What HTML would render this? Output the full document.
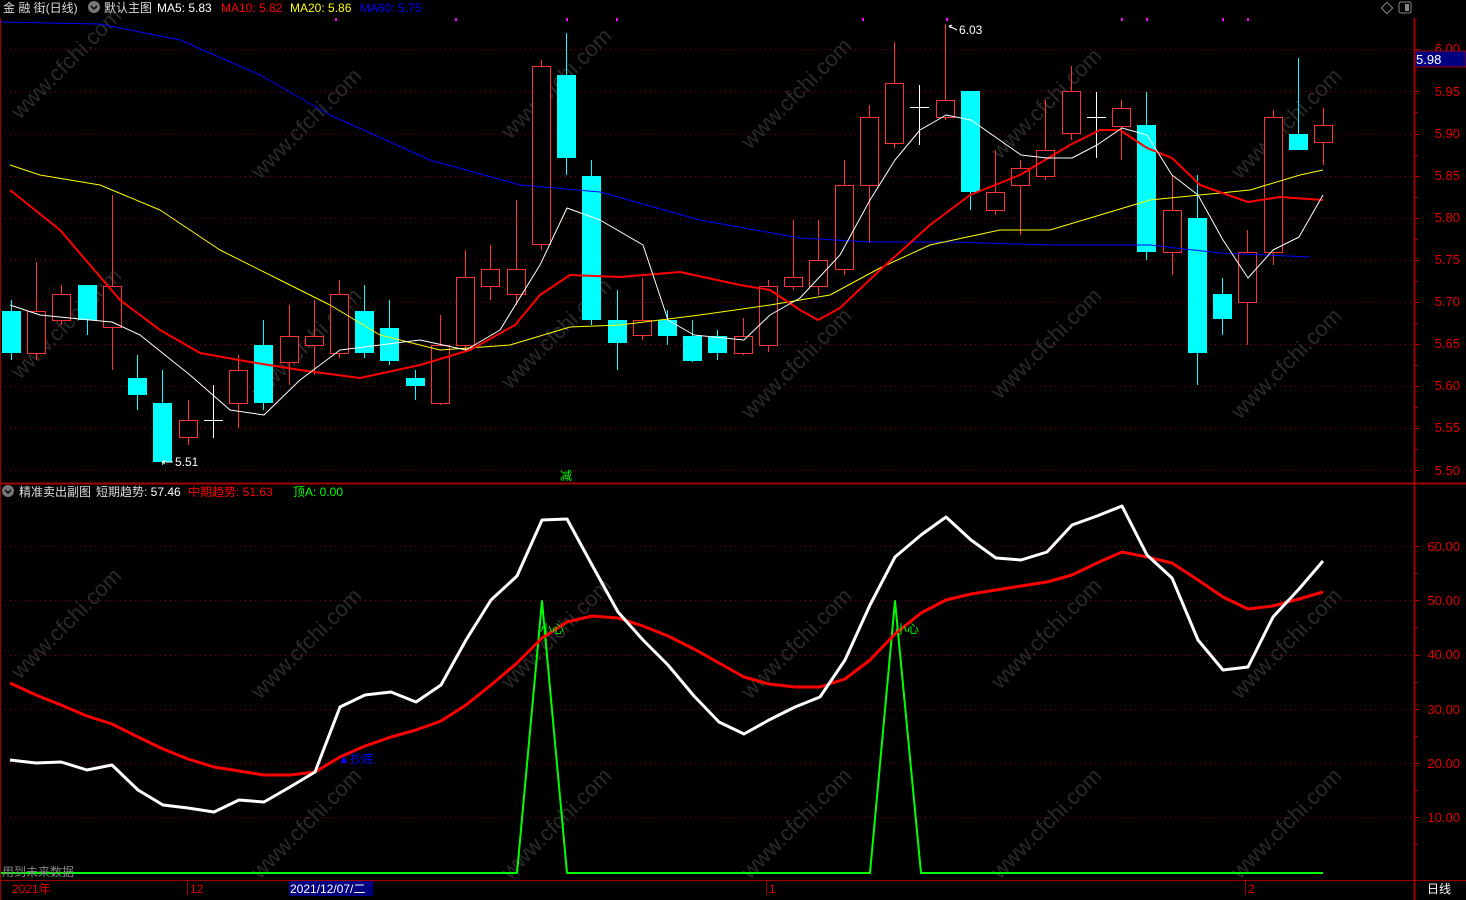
<!DOCTYPE html>
<html><head><meta charset="utf-8">
<style>
html,body{margin:0;padding:0;background:#000;width:1466px;height:900px;overflow:hidden;}
svg{display:block;}
text{font-family:"Liberation Sans","Noto Sans CJK SC",sans-serif;}
</style></head><body>
<svg id="s" width="1466" height="900" xmlns="http://www.w3.org/2000/svg">
<rect width="1466" height="900" fill="#000"/>
<g id="grid"></g>
<g id="wm" fill="#2a2a2a" font-size="22">
<text transform="translate(20,120) rotate(-45)">www.cfchi.com</text>
<text transform="translate(260,180) rotate(-45)">www.cfchi.com</text>
<text transform="translate(510,140) rotate(-45)">www.cfchi.com</text>
<text transform="translate(750,150) rotate(-45)">www.cfchi.com</text>
<text transform="translate(1000,160) rotate(-45)">www.cfchi.com</text>
<text transform="translate(1240,180) rotate(-45)">www.cfchi.com</text>
<text transform="translate(20,380) rotate(-45)">www.cfchi.com</text>
<text transform="translate(260,400) rotate(-45)">www.cfchi.com</text>
<text transform="translate(510,390) rotate(-45)">www.cfchi.com</text>
<text transform="translate(750,420) rotate(-45)">www.cfchi.com</text>
<text transform="translate(1000,400) rotate(-45)">www.cfchi.com</text>
<text transform="translate(1240,420) rotate(-45)">www.cfchi.com</text>
<text transform="translate(20,680) rotate(-45)">www.cfchi.com</text>
<text transform="translate(260,700) rotate(-45)">www.cfchi.com</text>
<text transform="translate(510,690) rotate(-45)">www.cfchi.com</text>
<text transform="translate(750,700) rotate(-45)">www.cfchi.com</text>
<text transform="translate(1000,690) rotate(-45)">www.cfchi.com</text>
<text transform="translate(1240,700) rotate(-45)">www.cfchi.com</text>
<text transform="translate(260,880) rotate(-45)">www.cfchi.com</text>
<text transform="translate(510,880) rotate(-45)">www.cfchi.com</text>
<text transform="translate(750,880) rotate(-45)">www.cfchi.com</text>
<text transform="translate(1000,880) rotate(-45)">www.cfchi.com</text>
<text transform="translate(1240,880) rotate(-45)">www.cfchi.com</text>
</g>
<g id="candles"></g>
<g id="lines" fill="none" stroke-linejoin="round"></g>
<line x1="0" y1="483.5" x2="1466" y2="483.5" stroke="#a00000" stroke-width="2"/>
<line x1="1414.5" y1="18" x2="1414.5" y2="900" stroke="#a00000" stroke-width="2"/>
<line x1="0" y1="880.5" x2="1466" y2="880.5" stroke="#a00000"/>
<line x1="0.5" y1="18" x2="0.5" y2="900" stroke="#a00000"/>
<g id="ticks" stroke="#a00000"></g>
<g fill="#e00000" font-size="13" text-anchor="end">
<text x="1460" y="53">6.00</text><text x="1460" y="96">5.95</text><text x="1460" y="138">5.90</text>
<text x="1460" y="180">5.85</text><text x="1460" y="222">5.80</text><text x="1460" y="264">5.75</text>
<text x="1460" y="306">5.70</text><text x="1460" y="348">5.65</text><text x="1460" y="390">5.60</text>
<text x="1460" y="432">5.55</text><text x="1460" y="475">5.50</text>
<text x="1460" y="551">60.00</text><text x="1460" y="605">50.00</text><text x="1460" y="659">40.00</text>
<text x="1460" y="714">30.00</text><text x="1460" y="768">20.00</text><text x="1460" y="822">10.00</text>
</g>
<rect x="1415" y="51" width="51" height="16" fill="#000080" stroke="#a00000"/>
<text x="1416" y="64" fill="#fff" font-size="13">5.98</text>
<rect x="1383" y="4" width="8" height="8" fill="none" stroke="#888" transform="rotate(45 1387 8)"/>
<rect x="1399" y="2" width="12" height="11" rx="2" fill="none" stroke="#888"/>
<rect x="1405" y="4" width="4" height="7" fill="#888"/>
<text x="3" y="12" fill="#ddd" font-size="12">金 融 街(日线)</text>
<circle cx="94" cy="7" r="6" fill="#777"/><path d="M91 6l3 3 3-3" stroke="#000" stroke-width="1.5" fill="none"/>
<text x="104" y="12" font-size="12" fill="#ddd">默认主图</text>
<text x="157" y="12" font-size="12" fill="#fff">MA5: 5.83</text>
<text x="221" y="12" font-size="12" fill="#ff0000">MA10: 5.82</text>
<text x="290" y="12" font-size="12" fill="#ffff00">MA20: 5.86</text>
<text x="360" y="12" font-size="12" fill="#0000ff">MA60: 5.75</text>
<g fill="#ff00ff">
<rect x="335" y="18" width="2" height="3"/><rect x="455" y="18" width="2" height="3"/><rect x="566" y="18" width="2" height="3"/><rect x="616" y="18" width="2" height="3"/><rect x="862" y="18" width="2" height="3"/><rect x="946" y="18" width="2" height="3"/><rect x="1121" y="18" width="2" height="3"/><rect x="1146" y="18" width="2" height="3"/><rect x="1222" y="18" width="2" height="3"/><rect x="1247" y="18" width="2" height="3"/>
</g>
<text x="959" y="34" fill="#fff" font-size="12">6.03</text>
<path d="M957 30l-8-4M949 26l3-1M949 26l2 2" stroke="#fff" fill="none"/>
<text x="175" y="466" fill="#fff" font-size="12">5.51</text>
<path d="M173 462h-11M162 462l3-2M162 462l3 2" stroke="#fff" fill="none"/>
<text x="560" y="480" fill="#00ff00" font-size="12">减</text>
<circle cx="8" cy="491" r="6" fill="#777"/><path d="M5 490l3 3 3-3" stroke="#000" stroke-width="1.5" fill="none"/>
<text x="19" y="496" font-size="12" fill="#ddd">精准卖出副图</text>
<text x="96" y="496" font-size="12" fill="#ddd">短期趋势: <tspan fill="#fff">57.46</tspan></text>
<text x="188" y="496" font-size="12" fill="#ff0000">中期趋势: 51.63</text>
<text x="293" y="496" font-size="12" fill="#00ff00">顶A: 0.00</text>
<text x="338" y="763" fill="#0000ff" font-size="12">▲抄底</text>
<text x="540" y="633" fill="#00ff00" font-size="12">小心</text>
<text x="895" y="633" fill="#00ff00" font-size="12">小心</text>
<text x="2" y="876" fill="#888" font-size="12">用到未来数据</text>
<text x="12" y="893" fill="#e00000" font-size="12">2021年</text>
<line x1="187.5" y1="881" x2="187.5" y2="895" stroke="#a00000"/>
<text x="190" y="893" fill="#e00000" font-size="12">12</text>
<rect x="289" y="881" width="84" height="15" fill="#000080"/>
<text x="290" y="893" fill="#fff" font-size="12">2021/12/07/二</text>
<line x1="766.5" y1="881" x2="766.5" y2="895" stroke="#a00000"/>
<text x="769" y="893" fill="#e00000" font-size="12">1</text>
<line x1="1245.5" y1="881" x2="1245.5" y2="895" stroke="#a00000"/>
<text x="1248" y="893" fill="#e00000" font-size="12">2</text>
<text x="1427" y="893" fill="#fff" font-size="12">日线</text>
</svg>
<script>
var NS="http://www.w3.org/2000/svg";
function el(p,t,a){var e=document.createElementNS(NS,t);for(var k in a)e.setAttribute(k,a[k]);document.getElementById(p).appendChild(e);return e;}
[49,91,134,176,218,260,302,344,386,428,470,546,600,655,709,763,817].forEach(function(y){
 el("grid","line",{x1:0,y1:y+.5,x2:1414,y2:y+.5,stroke:"#8a0000","stroke-dasharray":"1 4"});
 el("ticks","line",{x1:1414,y1:y+.5,x2:1420,y2:y+.5});
});
[70,112,155,197,239,281,323,365,407,449,573,627,682,736,790,844].forEach(function(y){el("ticks","line",{x1:1414,y1:y+.5,x2:1418,y2:y+.5});});
var C=[
["c",311,353,300,360],["r",311,353,262,360],["r",294,320,285,325],["c",285,320,285,335],["r",286,327,195,370],
["c",378,395,355,410],["c",403,462,370,465],["r",420,437,400,445],["x",420,420,385,438],["r",370,403,355,428],
["c",345,403,320,410],["r",336,362,305,385],["r",336,345,300,375],["r",294,353,280,358],["c",311,353,285,358],
["c",328,361,300,365],["c",378,386,370,400],["r",345,403,315,405],["r",277,345,250,350],["r",269,286,245,300],
["r",269,294,200,305],["r",66,244,60,250],["c",75,158,33,175],["c",176,320,160,325],["c",320,343,290,370],
["r",320,335,278,340],["c",320,336,310,345],["c",336,361,320,362],["c",336,353,330,360],["r",336,353,318,355],
["r",286,345,280,352],["r",277,286,220,290],["r",260,286,220,295],["r",185,269,160,275],["r",117,185,105,243],
["r",83,143,42,148],["x",107,107,85,145],["r",100,117,24,120],["c",91,192,91,210],["r",192,210,150,215],
["r",168,185,160,235],["r",150,176,100,180],["r",91,133,66,140],["x",117,117,92,158],["r",108,126,100,160],
["c",125,252,92,260],["r",210,252,175,275],["c",218,353,175,385],["c",294,319,278,335],["r",252,302,230,345],
["r",117,252,110,265],["c",134,150,58,150],["r",125,142,108,165]];
C.forEach(function(c,i){
 var x=Math.round(11+i*25.23);
 var col=c[0]=="c"?"#00ffff":(c[0]=="r"?"#ff3232":"#ffffff");
 el("candles","line",{x1:x+.5,y1:c[3],x2:x+.5,y2:c[4],stroke:col});
 if(c[0]=="c") el("candles","rect",{x:x-9,y:c[1],width:19,height:c[2]-c[1],fill:col});
 else if(c[0]=="r") el("candles","rect",{x:x-8.5,y:c[1]+.5,width:18,height:c[2]-c[1],fill:"#000",stroke:col});
 else el("candles","line",{x1:x-9,y1:c[1]+.5,x2:x+10,y2:c[1]+.5,stroke:col});
});
function pl(pts,col,w){el("lines","polyline",{points:pts,stroke:col,"stroke-width":w});}
pl("0,22 100,24 180,40 260,75 330,115 430,160 520,185 600,192 700,220 800,238 870,242 950,242 1050,245 1150,245 1220,253 1310,257","#0000ff",1);
pl("10,165 40,175 100,185 160,210 220,250 280,280 330,305 380,335 440,350 510,345 570,327 620,325 700,315 770,305 830,295 880,268 930,245 1000,230 1050,230 1100,215 1150,200 1200,195 1250,190 1300,175 1323,170","#ffff00",1);
pl("10,190 60,230 90,265 120,300 160,330 200,353 250,362 300,370 360,378 420,365 470,350 515,325 540,295 570,275 620,277 680,272 740,285 770,290 800,310 818,320 840,308 880,270 930,225 970,195 1020,175 1070,145 1100,130 1120,130 1147,148 1172,158 1200,185 1248,202 1280,197 1323,200","#ff0000",2);
pl("10,305 40,315 90,320 112,322 140,335 190,375 230,410 264,415 300,380 340,350 380,345 420,340 466,350 500,330 540,265 567,208 600,220 643,245 668,320 694,335 744,340 770,315 800,298 840,255 870,200 895,160 920,130 946,115 971,120 1021,155 1047,158 1072,158 1097,145 1122,128 1147,135 1172,175 1198,195 1223,240 1248,278 1273,250 1299,237 1323,195","#ffffff",1);
pl("0,873 517,873 542,601 567,873 870,873 895,601 921,873 1323,873","#00ff00",2);
pl("10,683 36,695 61,705 87,716 112,724 138,737 163,749 188,759 214,767 239,771 264,775 290,775 315,772 340,757 365,746 391,737 416,730 441,721 466,705 491,685 517,663 542,638 567,622 592,616 618,618 643,626 668,636 694,649 719,663 744,677 769,684 795,687 820,687 845,679 870,660 895,634 921,613 946,600 971,594 996,590 1021,586 1047,582 1072,575 1097,563 1122,552 1147,557 1172,563 1198,580 1223,597 1248,609 1273,606 1299,599 1323,592","#ff0000",3);
pl("10,760 36,763 61,762 87,770 112,765 138,790 163,805 188,808 214,812 239,800 264,802 290,787 315,772 340,707 365,695 391,692 416,702 441,685 466,640 491,600 517,576 542,520 567,519 592,565 618,612 643,640 668,665 694,696 719,722 744,734 769,720 795,707 820,697 845,660 870,605 895,557 921,535 946,517 971,540 996,558 1021,560 1047,552 1072,525 1097,516 1122,506 1147,555 1172,578 1198,640 1223,670 1248,667 1273,617 1299,589 1323,561","#ffffff",3);
</script>
</body></html>
